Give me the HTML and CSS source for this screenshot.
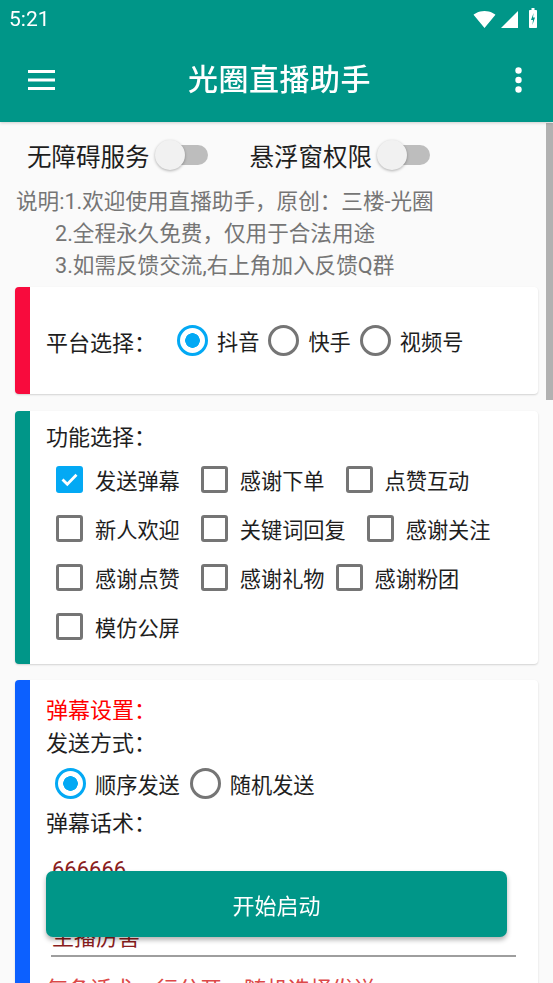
FILE: index.html
```html
<!DOCTYPE html>
<html lang="zh">
<head>
<meta charset="utf-8">
<title>光圈直播助手</title>
<link rel="stylesheet" href="styles.css">
</head>
<body>
<header class="topbar">
  <div class="status">
    <span class="time">5:21</span>
    <div class="status-icons">
      <svg class="ic-wifi" width="23" height="17" viewBox="0.4 3 23.2 18"><path d="M12 21L23.6 7C23.2 6.7 18.7 3 12 3 5.3 3 .8 6.7.4 7L12 21z" fill="#fff"/></svg>
      <svg class="ic-signal" width="17" height="17" viewBox="0 0 17 17"><path d="M0 17H17V0z" fill="#fff"/></svg>
      <svg class="ic-battery" width="8" height="20" viewBox="0 0 8 20"><rect x="2.5" y="0" width="3" height="2" fill="#fff"/><rect x="0" y="2" width="8" height="18" rx="0.8" fill="#fff"/><path d="M4.6 5L2 12H4L3.4 17L6 9.5H4Z" fill="#009688"/></svg>
    </div>
  </div>
  <div class="toolbar">
    <svg class="ic-menu" width="27" height="20" viewBox="0 0 27 20"><rect y="0" width="27" height="3" fill="#fff"/><rect y="8.5" width="27" height="3" fill="#fff"/><rect y="17" width="27" height="3" fill="#fff"/></svg>
    <h1 class="title">光圈直播助手</h1>
    <svg class="ic-more" width="7" height="26" viewBox="0 0 7 26"><circle cx="3.5" cy="3.5" r="3.2" fill="#fff"/><circle cx="3.5" cy="13" r="3.2" fill="#fff"/><circle cx="3.5" cy="22.5" r="3.2" fill="#fff"/></svg>
  </div>
</header>

<main class="content">
  <div class="switch-row">
    <div class="switch-item">
      <span>无障碍服务</span>
      <span class="switch"><span class="track"></span><span class="thumb"></span></span>
    </div>
    <div class="switch-item switch-item-second">
      <span>悬浮窗权限</span>
      <span class="switch"><span class="track"></span><span class="thumb"></span></span>
    </div>
  </div>

  <div class="notes">
    <div>说明:1.欢迎使用直播助手，原创：三楼-光圈</div>
    <div class="indent">2.全程永久免费，仅用于合法用途</div>
    <div class="indent">3.如需反馈交流,右上角加入反馈Q群</div>
  </div>

  <section class="card card-red">
    <div class="platform-row">
      <span class="label">平台选择：</span>
      <div class="options">
        <span class="option"><span class="radio checked"></span>抖音</span>
        <span class="option"><span class="radio"></span>快手</span>
        <span class="option"><span class="radio"></span>视频号</span>
      </div>
    </div>
  </section>

  <section class="card card-teal card-func">
    <div class="label line">功能选择：</div>
    <div class="check-row">
      <span class="check-item"><span class="check checked"><svg width="21" height="21" viewBox="0 0 21 21"><path d="M3.5 10.5L8.3 15.3L17.5 5.8" fill="none" stroke="#fff" stroke-width="2.8"/></svg></span>发送弹幕</span>
      <span class="check-item"><span class="check"></span>感谢下单</span>
      <span class="check-item"><span class="check"></span>点赞互动</span>
    </div>
    <div class="check-row">
      <span class="check-item"><span class="check"></span>新人欢迎</span>
      <span class="check-item"><span class="check"></span>关键词回复</span>
      <span class="check-item"><span class="check"></span>感谢关注</span>
    </div>
    <div class="check-row">
      <span class="check-item"><span class="check"></span>感谢点赞</span>
      <span class="check-item tight"><span class="check"></span>感谢礼物</span>
      <span class="check-item"><span class="check"></span>感谢粉团</span>
    </div>
    <div class="check-row">
      <span class="check-item"><span class="check"></span>模仿公屏</span>
    </div>
  </section>

  <section class="card card-blue card-danmu">
    <div class="label line red">弹幕设置：</div>
    <div class="label line">发送方式：</div>
    <div class="send-row">
      <span class="option"><span class="radio checked"></span>顺序发送</span>
      <span class="option"><span class="radio"></span>随机发送</span>
    </div>
    <div class="label line2">弹幕话术：</div>
    <div class="edit">
      <div>666666</div>
      <div>欢迎来到直播间</div>
      <div>主播厉害</div>
    </div>
    <div class="hint">每条话术一行分开，随机选择发送</div>
  </section>
</main>

<button class="start-btn">开始启动</button>
<div class="scrollbar"></div>
</body>
</html>
```

FILE: styles.css
```css
* {
  box-sizing: border-box;
  margin: 0;
  padding: 0;
}

html, body {
  width: 553px;
  height: 983px;
  overflow: hidden;
}

body {
  background: #fafafa;
  font-family: Roboto, "Noto Sans CJK SC", sans-serif;
  color: #1e1e1e;
  position: relative;
}

.topbar {
  background: #009688;
  color: #fff;
  box-shadow: 0 1px 3px rgba(0, 0, 0, 0.18);
  position: relative;
  z-index: 1;
}

.status {
  height: 38px;
  display: flex;
  align-items: center;
  justify-content: space-between;
  padding: 0 16px 0 9px;
}

.time {
  font-size: 21px;
  line-height: 1;
  font-family: Roboto, sans-serif;
}

.status-icons {
  display: flex;
  align-items: center;
}

.ic-signal {
  margin-left: 5px;
}

.ic-battery {
  margin-left: 11px;
  margin-top: -3px;
}

.toolbar {
  height: 84px;
  display: grid;
  grid-template-columns: 1fr auto 1fr;
  align-items: center;
}

.ic-menu {
  margin-left: 28px;
}

.title {
  font-size: 30px;
  font-weight: 500;
  line-height: 1;
  letter-spacing: 0.5px;
  padding-left: 6px;
}

.ic-more {
  justify-self: end;
  margin-right: 31px;
}

.content {
  padding-top: 13px;
}

.switch-row {
  display: flex;
  align-items: center;
  height: 40px;
  padding-left: 27px;
  font-size: 24.5px;
}

.switch-item {
  display: flex;
  align-items: center;
  gap: 5px;
}

.switch-item-second {
  margin-left: 42px;
}

.switch {
  position: relative;
  width: 53px;
  height: 30px;
  display: inline-block;
}

.switch .track {
  position: absolute;
  left: 13px;
  top: 5px;
  width: 40px;
  height: 20px;
  border-radius: 10px;
  background: #bdbdbd;
}

.switch .thumb {
  position: absolute;
  left: 0;
  top: 0;
  width: 30px;
  height: 30px;
  border-radius: 50%;
  background: #f1f1f1;
  box-shadow: 0 1px 3px rgba(0, 0, 0, 0.3);
}

.notes {
  margin-top: 11px;
  padding-left: 16px;
  font-size: 21.6px;
  line-height: 32px;
  color: #757575;
}

.notes .indent {
  padding-left: 39px;
}

.card {
  margin: 0 15px;
  background: #fff;
  border-radius: 4px;
  border-left: 15px solid;
  box-shadow: 0 1px 2px rgba(0, 0, 0, 0.16);
}

.card-red {
  border-left-color: #f80b3d;
  margin-top: 5px;
  height: 107px;
  display: flex;
  align-items: center;
  padding-left: 16px;
}

.card-teal {
  border-left-color: #009688;
  margin-top: 17px;
}

.card-blue {
  border-left-color: #0c60ff;
  margin-top: 16px;
}

.label {
  font-size: 22px;
}

.platform-row {
  display: flex;
  align-items: center;
}

.options {
  display: flex;
  align-items: center;
  gap: 9px;
  margin-left: 21px;
}

.option {
  display: flex;
  align-items: center;
  gap: 9px;
  font-size: 21.2px;
}

.radio {
  width: 31px;
  height: 31px;
  border-radius: 50%;
  border: 3px solid #757575;
  flex: none;
}

.radio.checked {
  border-color: #03a9f4;
  background: radial-gradient(circle, #03a9f4 0 7px, transparent 7.6px);
}

.card-func {
  padding: 10px 16px 13px;
}

.line {
  line-height: 34px;
}

.check-row {
  display: flex;
  align-items: center;
  height: 49px;
  padding-left: 10px;
}

.check-item {
  display: flex;
  align-items: center;
  gap: 12px;
  margin-right: 21px;
  font-size: 21.2px;
}

.check-item.tight {
  margin-right: 11px;
}

.check {
  width: 27px;
  height: 27px;
  border: 3px solid #757575;
  border-radius: 3px;
  flex: none;
  display: flex;
  align-items: center;
  justify-content: center;
}

.check.checked {
  background: #03a9f4;
  border-color: #03a9f4;
}

.card-danmu {
  padding: 14px 16px 0;
  height: 340px;
}

.card-danmu .line {
  line-height: 33px;
}

.red {
  color: #ff0000;
}

.send-row {
  display: flex;
  align-items: center;
  height: 47px;
  padding-left: 9px;
  gap: 10px;
}

.line2 {
  line-height: 34px;
}

.edit {
  margin: 12px 6px 0 5px;
  padding-left: 1px;
  font-size: 22px;
  line-height: 34px;
  color: #8a1d1d;
  border-bottom: 2px solid #9e9e9e;
}

.hint {
  margin-top: 16px;
  font-size: 22px;
  line-height: 34px;
  color: #dc4848;
}

.start-btn {
  position: fixed;
  left: 46px;
  right: 46px;
  bottom: 46px;
  height: 66px;
  border: none;
  border-radius: 7px;
  background: #009688;
  color: #fff;
  font-family: Roboto, "Noto Sans CJK SC", sans-serif;
  font-size: 22px;
  box-shadow: 0 3px 5px rgba(0, 0, 0, 0.3);
}

.scrollbar {
  position: fixed;
  right: 0;
  top: 123px;
  width: 7px;
  height: 277px;
  background: #b1b1b1;
}
```
